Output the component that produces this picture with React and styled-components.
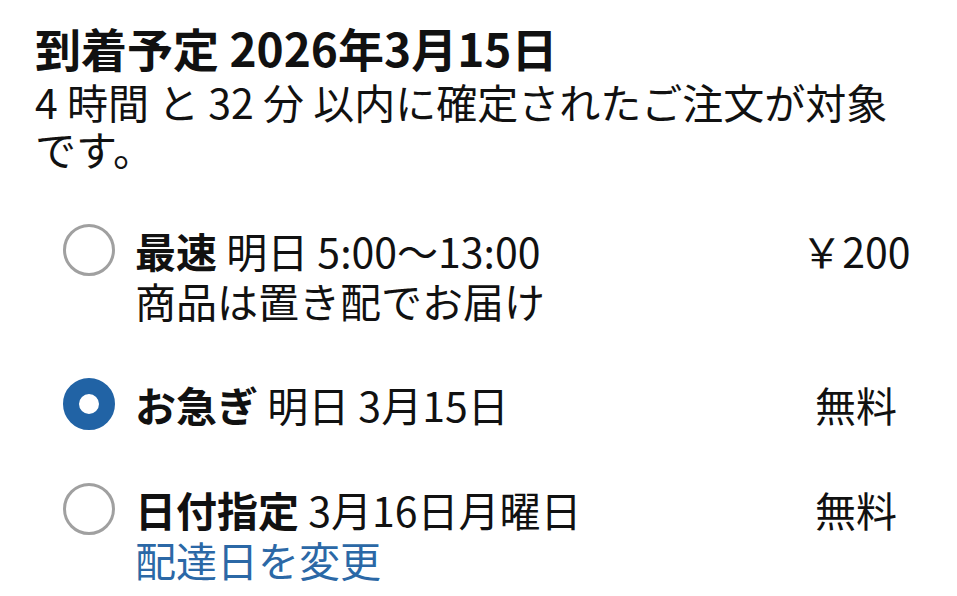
import React, { useState } from "react";
import styled, { createGlobalStyle } from "styled-components";

const GlobalStyle = createGlobalStyle`
  body {
    margin: 0;
    background: #ffffff;
    font-family: "Noto Sans CJK JP", "Noto Sans", sans-serif;
    color: #111111;
  }
`;

const Page = styled.div`
  padding: 19px 35px 0 35px;
`;

const Title = styled.h1`
  margin: 0;
  font-size: 46px;
  line-height: 56px;
  font-weight: 700;
`;

const Note = styled.p`
  margin: 3px 0 0 0;
  font-size: 41px;
  line-height: 47px;
`;

const Options = styled.div`
  display: flex;
  flex-direction: column;
  gap: 54px;
  margin: 53px 6px 0 28px;
`;

const Option = styled.label`
  display: grid;
  grid-template-columns: 52px 1fr 120px;
  column-gap: 20px;
  align-items: start;
  cursor: pointer;
`;

const Radio = styled.span`
  box-sizing: border-box;
  width: 52px;
  height: 52px;
  margin-top: -1px;
  border-radius: 50%;
  border: ${(p) => (p.checked ? "16px solid #2163a5" : "3px solid #a0a0a0")};
  background: #ffffff;
`;

const Body = styled.div`
  font-size: 41px;
  line-height: 50px;
`;

const Name = styled.strong`
  font-weight: 700;
`;

const Line = styled.div``;

const Link = styled.a`
  display: block;
  color: #2b68a6;
  text-decoration: none;
`;

const Price = styled.div`
  font-size: 41px;
  line-height: 50px;
  text-align: center;
`;

const options = [
  { id: "fast", name: "最速", when: "明日 5:00〜13:00", sub: "商品は置き配でお届け", price: "￥200" },
  { id: "rush", name: "お急ぎ", when: "明日 3月15日", price: "無料" },
  { id: "date", name: "日付指定", when: "3月16日月曜日", link: "配達日を変更", price: "無料" },
];

export default function App() {
  const [selected, setSelected] = useState("rush");

  return (
    <Page>
      <GlobalStyle />
      <Title>到着予定 2026年3月15日</Title>
      <Note>4 時間 と 32 分 以内に確定されたご注文が対象です。</Note>
      <Options>
        {options.map((o) => (
          <Option key={o.id} onClick={() => setSelected(o.id)}>
            <Radio checked={selected === o.id} />
            <Body>
              <Line>
                <Name>{o.name}</Name> {o.when}
              </Line>
              {o.sub && <Line>{o.sub}</Line>}
              {o.link && <Link>{o.link}</Link>}
            </Body>
            <Price>{o.price}</Price>
          </Option>
        ))}
      </Options>
    </Page>
  );
}
